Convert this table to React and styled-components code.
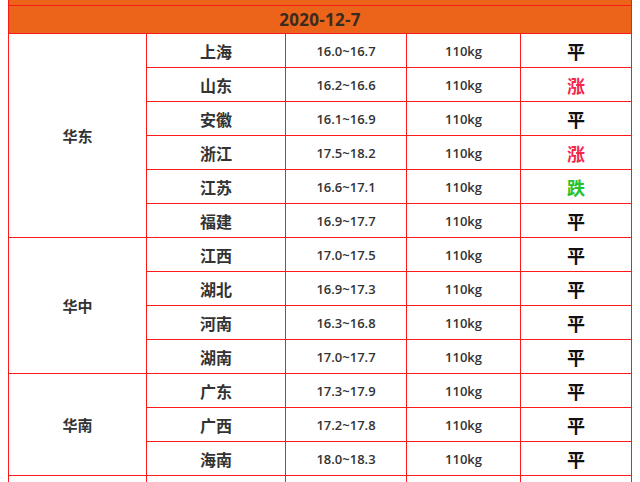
import React from "react";
import styled, { createGlobalStyle } from "styled-components";

const GlobalStyle = createGlobalStyle`
  body {
    margin: 0;
    background: #ffffff;
    font-family: "Noto Sans CJK SC", "Noto Sans", sans-serif;
  }
`;

const regions = [
  {
    name: "华东",
    rows: [
      { city: "上海", price: "16.0~16.7", weight: "110kg", trend: "平" },
      { city: "山东", price: "16.2~16.6", weight: "110kg", trend: "涨" },
      { city: "安徽", price: "16.1~16.9", weight: "110kg", trend: "平" },
      { city: "浙江", price: "17.5~18.2", weight: "110kg", trend: "涨" },
      { city: "江苏", price: "16.6~17.1", weight: "110kg", trend: "跌" },
      { city: "福建", price: "16.9~17.7", weight: "110kg", trend: "平" },
    ],
  },
  {
    name: "华中",
    rows: [
      { city: "江西", price: "17.0~17.5", weight: "110kg", trend: "平" },
      { city: "湖北", price: "16.9~17.3", weight: "110kg", trend: "平" },
      { city: "河南", price: "16.3~16.8", weight: "110kg", trend: "平" },
      { city: "湖南", price: "17.0~17.7", weight: "110kg", trend: "平" },
    ],
  },
  {
    name: "华南",
    rows: [
      { city: "广东", price: "17.3~17.9", weight: "110kg", trend: "平" },
      { city: "广西", price: "17.2~17.8", weight: "110kg", trend: "平" },
      { city: "海南", price: "18.0~18.3", weight: "110kg", trend: "平" },
    ],
  },
  {
    name: "",
    rows: [{ city: "", price: "", weight: "", trend: "" }],
  },
];

const trendColor = {
  平: "#111111",
  涨: "#f2274a",
  跌: "#25c22a",
};

const App = () => {
  return (
    <Page>
      <GlobalStyle />
      <TopStrip />
      <Table>
        <colgroup>
          <col style={{ width: 138 }} />
          <col style={{ width: 139 }} />
          <col style={{ width: 121 }} />
          <col style={{ width: 114 }} />
          <col />
        </colgroup>
        <tbody>
          <HeadRow>
            <HeadCell colSpan={5}>2020-12-7</HeadCell>
          </HeadRow>
          {regions.map((region) =>
            region.rows.map((row, i) => (
              <Row key={region.name + i}>
                {i === 0 && (
                  <RegionCell rowSpan={region.rows.length}>{region.name}</RegionCell>
                )}
                <CityCell>{row.city}</CityCell>
                <NumCell>{row.price}</NumCell>
                <NumCell>{row.weight}</NumCell>
                <TrendCell color={trendColor[row.trend]}>{row.trend}</TrendCell>
              </Row>
            ))
          )}
        </tbody>
      </Table>
    </Page>
  );
};

export default App;

const Page = styled.div`
  padding: 0 8px;
  width: 640px;
  box-sizing: border-box;
  height: 482px;
  overflow: hidden;
`;

const TopStrip = styled.div`
  height: 5px;
  background: #ec6419;
  border-left: 1px solid #ff1a1a;
  border-right: 1px solid #ff1a1a;
`;

const Table = styled.table`
  width: 624px;
  border-collapse: collapse;
  table-layout: fixed;
  border: 1px solid #ff1a1a;

  td {
    border: 1px solid #ff1a1a;
    padding: 0;
    text-align: center;
    vertical-align: middle;
  }
`;

const HeadRow = styled.tr`
  height: 28px;
`;

const HeadCell = styled.td`
  background: #ec6419;
  color: #3b2a20;
  font-size: 17px;
  font-weight: 700;
  letter-spacing: 0.3px;
  font-family: "Open Sans", "Noto Sans CJK SC", sans-serif;
`;

const Row = styled.tr`
  height: 34px;
`;

const RegionCell = styled.td`
  font-size: 15px;
  font-weight: 700;
  color: #333333;
`;

const CityCell = styled.td`
  font-size: 16px;
  font-weight: 700;
  color: #333333;
`;

const NumCell = styled.td`
  font-size: 13px;
  font-weight: 600;
  color: #333333;
  font-family: "Open Sans", "Noto Sans CJK SC", sans-serif;
`;

const TrendCell = styled.td`
  font-size: 18px;
  font-weight: 700;
  color: ${(p) => p.color || "#111111"};
`;
